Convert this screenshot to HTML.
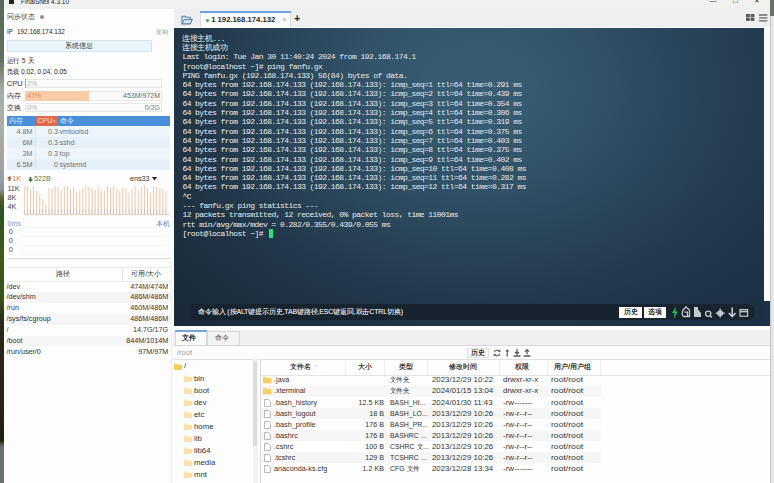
<!DOCTYPE html>
<html><head><meta charset="utf-8"><style>
*{margin:0;padding:0;box-sizing:border-box}
html,body{width:774px;height:483px;overflow:hidden;background:#f0f0f0;font-family:"Liberation Sans",sans-serif;color:#333}
.a{position:absolute}
.t{white-space:nowrap}
pre{font-family:"Liberation Mono",monospace}
</style></head>
<body>
<div class="a" style="left:0px;top:0px;width:4px;height:483px;background:linear-gradient(180deg,#5a6a5a 0px,#607060 60px,#a5aea5 90px,#a8b0a8 130px,#aca69e 150px,#a2a2a2 170px,#92a0a6 180px,#8a9090 190px,#5a6030 198px,#2d5222 210px,#3f5a1c 250px,#3a5218 300px,#2a2818 322px,#2c2519 400px,#201c10 440px,#6a7070 447px,#687070 483px)"></div>
<div class="a" style="left:4px;top:0px;width:766px;height:9px;background:#f1f1f0"></div>
<div class="a" style="left:9px;top:-1px;width:5px;height:4.5px;background:#222"></div>
<div class="a t" style="left:21.2px;top:-3.20px;font-size:8px;line-height:10px;color:#1a1a1a;font-weight:normal;transform:scaleX(0.805);transform-origin:0 50%;">FinalShell 4.3.10</div>
<div class="a t" style="left:730.5px;width:10px;text-align:center;top:-4.50px;font-size:8px;line-height:10px;color:#333;font-weight:normal;">□</div>
<div class="a t" style="left:752.0px;width:10px;text-align:center;top:-4.50px;font-size:7px;line-height:10px;color:#333;font-weight:normal;">✕</div>
<div class="a t" style="left:708.0px;width:10px;text-align:center;top:-4.50px;font-size:7px;line-height:10px;color:#333;font-weight:normal;">—</div>
<div class="a" style="left:769.5px;top:0px;width:4.5px;height:483px;background:#e6e6e6;border-left:1.5px solid #c4c4c4"></div>
<div class="a" style="left:769.5px;top:0px;width:4.5px;height:16px;background:#6c706a"></div>
<div class="a" style="left:4px;top:9px;width:169.5px;height:474px;background:#fdfdfd"></div>
<div class="a" style="left:170.5px;top:262px;width:0.8px;height:221px;background:#ececec"></div>
<div class="a t" style="left:7.4px;top:12.40px;font-size:7.5px;line-height:10px;color:#4a4a4a;font-weight:normal;"><span style="font-size:95%">同步状态</span></div>
<div class="a" style="left:40.2px;top:15.4px;width:4px;height:4px;background:#909090;border-radius:50%"></div>
<div class="a t" style="left:6.8px;top:26.60px;font-size:7.5px;line-height:10px;color:#222;font-weight:normal;transform:scaleX(0.800);transform-origin:0 50%;">IP</div>
<div class="a t" style="left:16.9px;top:26.60px;font-size:7.5px;line-height:10px;color:#262626;font-weight:normal;transform:scaleX(0.850);transform-origin:0 50%;">192.168.174.132</div>
<div class="a t" style="left:137.5px;width:30px;text-align:right;top:26.60px;font-size:6.5px;line-height:10px;color:#9a9a9a;font-weight:normal;"><span style="font-size:95%">复制</span></div>
<div class="a" style="left:6.8px;top:40.3px;width:145.2px;height:11.8px;background:#e8f5fb;border:1px solid #d5e3ea"></div>
<div class="a t" style="left:39.400000000000006px;width:80px;text-align:center;top:41.20px;font-size:7.5px;line-height:10px;color:#333;font-weight:normal;"><span style="font-size:95%">系统信息</span></div>
<div class="a t" style="left:6.8px;top:56.20px;font-size:7.5px;line-height:10px;color:#333;font-weight:normal;transform:scaleX(0.920);transform-origin:0 50%;"><span style="font-size:95%">运行</span> 5 <span style="font-size:95%">天</span></div>
<div class="a t" style="left:6.8px;top:66.70px;font-size:7.5px;line-height:10px;color:#262626;font-weight:normal;transform:scaleX(0.876);transform-origin:0 50%;"><span style="font-size:95%">负载</span> 0.02, 0.04, 0.05</div>
<div class="a t" style="left:6.8px;top:79.20px;font-size:7.5px;line-height:10px;color:#333;font-weight:normal;">CPU</div>
<div class="a" style="left:24.8px;top:79.2px;width:137.7px;height:9.3px;background:#fbfbfb;border:1px solid #e6e6e6"></div>
<div class="a" style="left:24.8px;top:79.2px;width:1.2px;height:9.3px;background:#7fbf7f"></div>
<div class="a t" style="left:27px;top:79.00px;font-size:7px;line-height:10px;color:#a8b8a8;font-weight:normal;">2%</div>
<div class="a t" style="left:6.8px;top:91.00px;font-size:7.5px;line-height:10px;color:#333;font-weight:normal;"><span style="font-size:95%">内存</span></div>
<div class="a" style="left:24.8px;top:91.0px;width:137.7px;height:9.8px;background:#fbfbfb;border:1px solid #e6e6e6"></div>
<div class="a" style="left:24.8px;top:91.0px;width:64.5px;height:9.8px;background:#f9cba8"></div>
<div class="a t" style="left:27px;top:91.00px;font-size:7px;line-height:10px;color:#d98c5e;font-weight:normal;">47%</div>
<div class="a t" style="left:100px;width:60px;text-align:right;top:91.00px;font-size:7px;line-height:10px;color:#666;font-weight:normal;">453M/972M</div>
<div class="a t" style="left:6.8px;top:103.40px;font-size:7.5px;line-height:10px;color:#333;font-weight:normal;"><span style="font-size:95%">交换</span></div>
<div class="a" style="left:24.8px;top:103.2px;width:137.7px;height:9.2px;background:#fbfbfb;border:1px solid #e6e6e6"></div>
<div class="a t" style="left:27px;top:103.20px;font-size:7px;line-height:10px;color:#b0b0b0;font-weight:normal;">0%</div>
<div class="a t" style="left:100px;width:60px;text-align:right;top:103.20px;font-size:7px;line-height:10px;color:#7a7a7a;font-weight:normal;">0/2G</div>
<div class="a" style="left:6.7px;top:116.0px;width:163.3px;height:10.2px;background:#4b8ed8"></div>
<div class="a" style="left:35.7px;top:116.0px;width:22.2px;height:10.2px;background:#dd6a4a"></div>
<div class="a t" style="left:8.5px;top:116.10px;font-size:7px;line-height:10px;color:#d8eaff;font-weight:normal;"><span style="font-size:95%">内存</span></div>
<div class="a t" style="left:37.5px;top:116.10px;font-size:7px;line-height:10px;color:#ffe0d4;font-weight:normal;">CPU</div>
<div class="a t" style="left:52.5px;top:116.10px;font-size:5px;line-height:10px;color:#ffd0c0;font-weight:normal;">▾</div>
<div class="a t" style="left:60px;top:116.10px;font-size:7px;line-height:10px;color:#d8eaff;font-weight:normal;"><span style="font-size:95%">命令</span></div>
<div class="a" style="left:6.7px;top:126.2px;width:163.3px;height:10.93px;background:#eef5fb"></div>
<div class="a t" style="left:2.3999999999999986px;width:30px;text-align:right;top:127.30px;font-size:7.2px;line-height:10px;color:#707070;font-weight:normal;">4.8M</div>
<div class="a t" style="left:27.9px;width:30px;text-align:right;top:127.30px;font-size:7.2px;line-height:10px;color:#707070;font-weight:normal;">0.3</div>
<div class="a t" style="left:59.4px;top:127.30px;font-size:7.2px;line-height:10px;color:#707070;font-weight:normal;">vmtoolsd</div>
<div class="a" style="left:6.7px;top:137.13px;width:163.3px;height:10.93px;background:#e6f0f9"></div>
<div class="a t" style="left:2.3999999999999986px;width:30px;text-align:right;top:138.23px;font-size:7.2px;line-height:10px;color:#707070;font-weight:normal;">6M</div>
<div class="a t" style="left:27.9px;width:30px;text-align:right;top:138.23px;font-size:7.2px;line-height:10px;color:#707070;font-weight:normal;">0.3</div>
<div class="a t" style="left:59.4px;top:138.23px;font-size:7.2px;line-height:10px;color:#707070;font-weight:normal;">sshd</div>
<div class="a" style="left:6.7px;top:148.06px;width:163.3px;height:10.93px;background:#eef5fb"></div>
<div class="a t" style="left:2.3999999999999986px;width:30px;text-align:right;top:149.16px;font-size:7.2px;line-height:10px;color:#707070;font-weight:normal;">3M</div>
<div class="a t" style="left:27.9px;width:30px;text-align:right;top:149.16px;font-size:7.2px;line-height:10px;color:#707070;font-weight:normal;">0.3</div>
<div class="a t" style="left:59.4px;top:149.16px;font-size:7.2px;line-height:10px;color:#707070;font-weight:normal;">top</div>
<div class="a" style="left:6.7px;top:158.99px;width:163.3px;height:10.93px;background:#e6f0f9"></div>
<div class="a t" style="left:2.3999999999999986px;width:30px;text-align:right;top:160.09px;font-size:7.2px;line-height:10px;color:#707070;font-weight:normal;">6.5M</div>
<div class="a t" style="left:27.9px;width:30px;text-align:right;top:160.09px;font-size:7.2px;line-height:10px;color:#707070;font-weight:normal;">0</div>
<div class="a t" style="left:59.4px;top:160.09px;font-size:7.2px;line-height:10px;color:#707070;font-weight:normal;">systemd</div>
<div class="a" style="left:35px;top:126.2px;width:0.6px;height:43.7px;background:#d8e4ee"></div>
<svg class="a" style="left:6.5px;top:176.3px" width="5" height="5" viewBox="0 0 5 5"><path d="M2.5 0 L5 2.6 L3.4 2.6 L3.4 5 L1.6 5 L1.6 2.6 L0 2.6 Z" fill="#9a5a2a"/></svg>
<div class="a t" style="left:12.2px;top:174.00px;font-size:7.2px;line-height:10px;color:#d57a3c;font-weight:normal;">1K</div>
<svg class="a" style="left:28.2px;top:176.5px" width="5" height="5" viewBox="0 0 5 5"><path d="M2.5 5 L5 2.4 L3.4 2.4 L3.4 0 L1.6 0 L1.6 2.4 L0 2.4 Z" fill="#2f6a38"/></svg>
<div class="a t" style="left:34px;top:174.00px;font-size:7.2px;line-height:10px;color:#4f8058;font-weight:normal;">522B</div>
<div class="a t" style="left:130px;top:174.30px;font-size:7.2px;line-height:10px;color:#333;font-weight:normal;">ens33</div>
<svg class="a" style="left:152.3px;top:177.3px" width="5" height="4" viewBox="0 0 5 4"><path d="M0 0 L5 0 L2.5 3.6 Z" fill="#222"/></svg>
<div class="a t" style="left:7.4px;top:184.00px;font-size:7.2px;line-height:10px;color:#444;font-weight:normal;">11K</div>
<div class="a t" style="left:7.4px;top:193.20px;font-size:7.2px;line-height:10px;color:#444;font-weight:normal;">8K</div>
<div class="a t" style="left:7.4px;top:202.40px;font-size:7.2px;line-height:10px;color:#444;font-weight:normal;">4K</div>
<svg class="a" style="left:24px;top:184.5px" width="146" height="31" viewBox="0 0 146 31"><line x1="0.30" y1="1.00" x2="0.30" y2="24" stroke="#efc6a4" stroke-width="0.95"/><line x1="0.30" y1="24" x2="0.30" y2="30" stroke="#c9b09c" stroke-width="0.9"/><line x1="3.38" y1="1.00" x2="3.38" y2="24" stroke="#efc6a4" stroke-width="0.95"/><line x1="3.38" y1="24" x2="3.38" y2="30" stroke="#c9b09c" stroke-width="0.9"/><line x1="6.46" y1="4.00" x2="6.46" y2="24" stroke="#efc6a4" stroke-width="0.95"/><line x1="6.46" y1="24" x2="6.46" y2="30" stroke="#c9b09c" stroke-width="0.9"/><line x1="9.54" y1="1.00" x2="9.54" y2="24" stroke="#efc6a4" stroke-width="0.95"/><line x1="9.54" y1="24" x2="9.54" y2="30" stroke="#c9b09c" stroke-width="0.9"/><line x1="12.62" y1="6.00" x2="12.62" y2="24" stroke="#efc6a4" stroke-width="0.95"/><line x1="12.62" y1="24" x2="12.62" y2="30" stroke="#c9b09c" stroke-width="0.9"/><line x1="15.70" y1="9.00" x2="15.70" y2="24" stroke="#efc6a4" stroke-width="0.95"/><line x1="15.70" y1="24" x2="15.70" y2="30" stroke="#c9b09c" stroke-width="0.9"/><line x1="18.78" y1="14.00" x2="18.78" y2="24" stroke="#efc6a4" stroke-width="0.95"/><line x1="18.78" y1="24" x2="18.78" y2="30" stroke="#c9b09c" stroke-width="0.9"/><line x1="21.86" y1="20.00" x2="21.86" y2="24" stroke="#efc6a4" stroke-width="0.95"/><line x1="21.86" y1="24" x2="21.86" y2="30" stroke="#c9b09c" stroke-width="0.9"/><line x1="24.94" y1="3.00" x2="24.94" y2="24" stroke="#efc6a4" stroke-width="0.95"/><line x1="24.94" y1="24" x2="24.94" y2="30" stroke="#c9b09c" stroke-width="0.9"/><line x1="28.02" y1="4.00" x2="28.02" y2="24" stroke="#efc6a4" stroke-width="0.95"/><line x1="28.02" y1="24" x2="28.02" y2="30" stroke="#c9b09c" stroke-width="0.9"/><line x1="31.10" y1="1.00" x2="31.10" y2="24" stroke="#efc6a4" stroke-width="0.95"/><line x1="31.10" y1="24" x2="31.10" y2="30" stroke="#c9b09c" stroke-width="0.9"/><line x1="34.18" y1="2.00" x2="34.18" y2="24" stroke="#efc6a4" stroke-width="0.95"/><line x1="34.18" y1="24" x2="34.18" y2="30" stroke="#c9b09c" stroke-width="0.9"/><line x1="37.26" y1="5.00" x2="37.26" y2="24" stroke="#efc6a4" stroke-width="0.95"/><line x1="37.26" y1="24" x2="37.26" y2="30" stroke="#c9b09c" stroke-width="0.9"/><line x1="40.34" y1="1.00" x2="40.34" y2="24" stroke="#efc6a4" stroke-width="0.95"/><line x1="40.34" y1="24" x2="40.34" y2="30" stroke="#c9b09c" stroke-width="0.9"/><line x1="43.42" y1="1.00" x2="43.42" y2="24" stroke="#efc6a4" stroke-width="0.95"/><line x1="43.42" y1="24" x2="43.42" y2="30" stroke="#c9b09c" stroke-width="0.9"/><line x1="46.50" y1="4.00" x2="46.50" y2="24" stroke="#efc6a4" stroke-width="0.95"/><line x1="46.50" y1="24" x2="46.50" y2="30" stroke="#c9b09c" stroke-width="0.9"/><line x1="49.58" y1="2.00" x2="49.58" y2="24" stroke="#efc6a4" stroke-width="0.95"/><line x1="49.58" y1="24" x2="49.58" y2="30" stroke="#c9b09c" stroke-width="0.9"/><line x1="52.66" y1="8.00" x2="52.66" y2="24" stroke="#efc6a4" stroke-width="0.95"/><line x1="52.66" y1="24" x2="52.66" y2="30" stroke="#c9b09c" stroke-width="0.9"/><line x1="55.74" y1="5.00" x2="55.74" y2="24" stroke="#efc6a4" stroke-width="0.95"/><line x1="55.74" y1="24" x2="55.74" y2="30" stroke="#c9b09c" stroke-width="0.9"/><line x1="58.82" y1="3.00" x2="58.82" y2="24" stroke="#efc6a4" stroke-width="0.95"/><line x1="58.82" y1="24" x2="58.82" y2="30" stroke="#c9b09c" stroke-width="0.9"/><line x1="61.90" y1="1.00" x2="61.90" y2="24" stroke="#efc6a4" stroke-width="0.95"/><line x1="61.90" y1="24" x2="61.90" y2="30" stroke="#c9b09c" stroke-width="0.9"/><line x1="64.98" y1="2.00" x2="64.98" y2="24" stroke="#efc6a4" stroke-width="0.95"/><line x1="64.98" y1="24" x2="64.98" y2="30" stroke="#c9b09c" stroke-width="0.9"/><line x1="68.06" y1="3.00" x2="68.06" y2="24" stroke="#efc6a4" stroke-width="0.95"/><line x1="68.06" y1="24" x2="68.06" y2="30" stroke="#c9b09c" stroke-width="0.9"/><line x1="71.14" y1="5.00" x2="71.14" y2="24" stroke="#efc6a4" stroke-width="0.95"/><line x1="71.14" y1="24" x2="71.14" y2="30" stroke="#c9b09c" stroke-width="0.9"/><line x1="74.22" y1="2.00" x2="74.22" y2="24" stroke="#efc6a4" stroke-width="0.95"/><line x1="74.22" y1="24" x2="74.22" y2="30" stroke="#c9b09c" stroke-width="0.9"/><line x1="77.30" y1="4.00" x2="77.30" y2="24" stroke="#efc6a4" stroke-width="0.95"/><line x1="77.30" y1="24" x2="77.30" y2="30" stroke="#c9b09c" stroke-width="0.9"/><line x1="80.38" y1="6.00" x2="80.38" y2="24" stroke="#efc6a4" stroke-width="0.95"/><line x1="80.38" y1="24" x2="80.38" y2="30" stroke="#c9b09c" stroke-width="0.9"/><line x1="83.46" y1="1.00" x2="83.46" y2="24" stroke="#efc6a4" stroke-width="0.95"/><line x1="83.46" y1="24" x2="83.46" y2="30" stroke="#c9b09c" stroke-width="0.9"/><line x1="86.54" y1="3.00" x2="86.54" y2="24" stroke="#efc6a4" stroke-width="0.95"/><line x1="86.54" y1="24" x2="86.54" y2="30" stroke="#c9b09c" stroke-width="0.9"/><line x1="89.62" y1="1.00" x2="89.62" y2="24" stroke="#efc6a4" stroke-width="0.95"/><line x1="89.62" y1="24" x2="89.62" y2="30" stroke="#c9b09c" stroke-width="0.9"/><line x1="92.70" y1="4.00" x2="92.70" y2="24" stroke="#efc6a4" stroke-width="0.95"/><line x1="92.70" y1="24" x2="92.70" y2="30" stroke="#c9b09c" stroke-width="0.9"/><line x1="95.78" y1="6.00" x2="95.78" y2="24" stroke="#efc6a4" stroke-width="0.95"/><line x1="95.78" y1="24" x2="95.78" y2="30" stroke="#c9b09c" stroke-width="0.9"/><line x1="98.86" y1="2.00" x2="98.86" y2="24" stroke="#efc6a4" stroke-width="0.95"/><line x1="98.86" y1="24" x2="98.86" y2="30" stroke="#c9b09c" stroke-width="0.9"/><line x1="101.94" y1="3.00" x2="101.94" y2="24" stroke="#efc6a4" stroke-width="0.95"/><line x1="101.94" y1="24" x2="101.94" y2="30" stroke="#c9b09c" stroke-width="0.9"/><line x1="105.02" y1="8.00" x2="105.02" y2="24" stroke="#efc6a4" stroke-width="0.95"/><line x1="105.02" y1="24" x2="105.02" y2="30" stroke="#c9b09c" stroke-width="0.9"/><line x1="108.10" y1="4.00" x2="108.10" y2="24" stroke="#efc6a4" stroke-width="0.95"/><line x1="108.10" y1="24" x2="108.10" y2="30" stroke="#c9b09c" stroke-width="0.9"/><line x1="111.18" y1="1.00" x2="111.18" y2="24" stroke="#efc6a4" stroke-width="0.95"/><line x1="111.18" y1="24" x2="111.18" y2="30" stroke="#c9b09c" stroke-width="0.9"/><line x1="114.26" y1="6.00" x2="114.26" y2="24" stroke="#efc6a4" stroke-width="0.95"/><line x1="114.26" y1="24" x2="114.26" y2="30" stroke="#c9b09c" stroke-width="0.9"/><line x1="117.34" y1="2.00" x2="117.34" y2="24" stroke="#efc6a4" stroke-width="0.95"/><line x1="117.34" y1="24" x2="117.34" y2="30" stroke="#c9b09c" stroke-width="0.9"/><line x1="120.42" y1="0.00" x2="120.42" y2="24" stroke="#efc6a4" stroke-width="0.95"/><line x1="120.42" y1="24" x2="120.42" y2="30" stroke="#c9b09c" stroke-width="0.9"/><line x1="123.50" y1="3.00" x2="123.50" y2="24" stroke="#efc6a4" stroke-width="0.95"/><line x1="123.50" y1="24" x2="123.50" y2="30" stroke="#c9b09c" stroke-width="0.9"/><line x1="126.58" y1="8.00" x2="126.58" y2="24" stroke="#efc6a4" stroke-width="0.95"/><line x1="126.58" y1="24" x2="126.58" y2="30" stroke="#c9b09c" stroke-width="0.9"/><line x1="129.66" y1="1.00" x2="129.66" y2="24" stroke="#efc6a4" stroke-width="0.95"/><line x1="129.66" y1="24" x2="129.66" y2="30" stroke="#c9b09c" stroke-width="0.9"/><line x1="132.74" y1="2.00" x2="132.74" y2="24" stroke="#efc6a4" stroke-width="0.95"/><line x1="132.74" y1="24" x2="132.74" y2="30" stroke="#c9b09c" stroke-width="0.9"/><line x1="135.82" y1="3.00" x2="135.82" y2="24" stroke="#efc6a4" stroke-width="0.95"/><line x1="135.82" y1="24" x2="135.82" y2="30" stroke="#c9b09c" stroke-width="0.9"/><line x1="138.90" y1="4.00" x2="138.90" y2="24" stroke="#efc6a4" stroke-width="0.95"/><line x1="138.90" y1="24" x2="138.90" y2="30" stroke="#c9b09c" stroke-width="0.9"/><line x1="141.98" y1="6.00" x2="141.98" y2="24" stroke="#efc6a4" stroke-width="0.95"/><line x1="141.98" y1="24" x2="141.98" y2="30" stroke="#c9b09c" stroke-width="0.9"/><line x1="0" y1="29.6" x2="146" y2="29.6" stroke="#e8cdb5" stroke-width="0.9"/></svg>
<div class="a t" style="left:7.4px;top:218.60px;font-size:7.2px;line-height:10px;color:#7ba3cc;font-weight:normal;">0ms</div>
<div class="a t" style="left:150px;width:20px;text-align:right;top:219.00px;font-size:7px;line-height:10px;color:#5b86c0;font-weight:normal;"><span style="font-size:95%">本机</span></div>
<div class="a" style="left:22px;top:226.8px;width:148px;height:0.6px;background:#f4f4f4"></div>
<div class="a" style="left:22px;top:235.5px;width:148px;height:0.6px;background:#f4f4f4"></div>
<div class="a" style="left:22px;top:244.5px;width:148px;height:0.6px;background:#f4f4f4"></div>
<div class="a" style="left:22px;top:254px;width:148px;height:0.6px;background:#f4f4f4"></div>
<div class="a t" style="left:8.7px;top:227.40px;font-size:7.2px;line-height:10px;color:#444;font-weight:normal;">0</div>
<div class="a t" style="left:8.7px;top:235.80px;font-size:7.2px;line-height:10px;color:#444;font-weight:normal;">0</div>
<div class="a t" style="left:8.7px;top:245.00px;font-size:7.2px;line-height:10px;color:#444;font-weight:normal;">0</div>
<div class="a" style="left:6.5px;top:257.8px;width:164px;height:1px;background:#dcdcdc"></div>
<div class="a" style="left:6.5px;top:266.5px;width:164.5px;height:1px;background:#eaeaea"></div>
<div class="a" style="left:6.5px;top:281px;width:164.5px;height:0.8px;background:#eaeaea"></div>
<div class="a" style="left:121.6px;top:267px;width:0.8px;height:14px;background:#e6e6e6"></div>
<div class="a t" style="left:42.5px;width:40px;text-align:center;top:269.00px;font-size:7.2px;line-height:10px;color:#333;font-weight:normal;"><span style="font-size:95%">路径</span></div>
<div class="a t" style="left:121.4px;width:50px;text-align:center;top:269.00px;font-size:7.2px;line-height:10px;color:#333;font-weight:normal;"><span style="font-size:95%">可用</span>/<span style="font-size:95%">大小</span></div>
<div class="a t" style="left:6.5px;top:281.60px;font-size:7.2px;line-height:10px;color:#333;font-weight:normal;">/dev</div>
<div class="a t" style="left:108.19999999999999px;width:60px;text-align:right;top:281.60px;font-size:7.2px;line-height:10px;color:#333;font-weight:normal;">474M/474M</div>
<div class="a" style="left:6.5px;top:292.07000000000005px;width:164.5px;height:10.87px;background:#f5f5f5"></div>
<div class="a t" style="left:6.5px;top:292.47px;font-size:7.2px;line-height:10px;color:#333;font-weight:normal;">/dev/shm</div>
<div class="a t" style="left:108.19999999999999px;width:60px;text-align:right;top:292.47px;font-size:7.2px;line-height:10px;color:#333;font-weight:normal;">486M/486M</div>
<div class="a t" style="left:6.5px;top:303.34px;font-size:7.2px;line-height:10px;color:#333;font-weight:normal;">/run</div>
<div class="a t" style="left:108.19999999999999px;width:60px;text-align:right;top:303.34px;font-size:7.2px;line-height:10px;color:#333;font-weight:normal;">460M/486M</div>
<div class="a" style="left:6.5px;top:313.81000000000006px;width:164.5px;height:10.87px;background:#f5f5f5"></div>
<div class="a t" style="left:6.5px;top:314.21px;font-size:7.2px;line-height:10px;color:#333;font-weight:normal;">/sys/fs/cgroup</div>
<div class="a t" style="left:108.19999999999999px;width:60px;text-align:right;top:314.21px;font-size:7.2px;line-height:10px;color:#333;font-weight:normal;">486M/486M</div>
<div class="a t" style="left:6.5px;top:325.08px;font-size:7.2px;line-height:10px;color:#333;font-weight:normal;">/</div>
<div class="a t" style="left:108.19999999999999px;width:60px;text-align:right;top:325.08px;font-size:7.2px;line-height:10px;color:#333;font-weight:normal;">14.7G/17G</div>
<div class="a" style="left:6.5px;top:335.55000000000007px;width:164.5px;height:10.87px;background:#f5f5f5"></div>
<div class="a t" style="left:6.5px;top:335.95px;font-size:7.2px;line-height:10px;color:#333;font-weight:normal;">/boot</div>
<div class="a t" style="left:108.19999999999999px;width:60px;text-align:right;top:335.95px;font-size:7.2px;line-height:10px;color:#333;font-weight:normal;">844M/1014M</div>
<div class="a t" style="left:6.5px;top:346.82px;font-size:7.2px;line-height:10px;color:#333;font-weight:normal;">/run/user/0</div>
<div class="a t" style="left:108.19999999999999px;width:60px;text-align:right;top:346.82px;font-size:7.2px;line-height:10px;color:#333;font-weight:normal;">97M/97M</div>
<div class="a" style="left:174px;top:9px;width:595.5px;height:19px;background:#efeff1"></div>
<svg class="a" style="left:180.5px;top:14.5px" width="12" height="10" viewBox="0 0 12 10"><path d="M1 1.2 L4.2 1.2 L5.2 2.3 L9.3 2.3 L9.3 4.3 L11.2 4.3 L9.4 8.9 L1 8.9 Z" fill="#d3e6f6" stroke="#5f7f9f" stroke-width="1.1" stroke-linejoin="round"/><path d="M1.2 8.6 L3 4.6 L11 4.6" fill="none" stroke="#5f7f9f" stroke-width="1"/></svg>
<div class="a" style="left:200.4px;top:11.2px;width:90.3px;height:15.6px;background:#fafafa;border-left:1px solid #dcdcdc;border-right:1px solid #dcdcdc"></div>
<div class="a" style="left:200.4px;top:11.2px;width:90.3px;height:1.8px;background:#6ea2dc"></div>
<div class="a" style="left:205.7px;top:18.7px;width:3px;height:3px;background:#3aaa50;border-radius:50%"></div>
<div class="a t" style="left:211.2px;top:14.90px;font-size:7.7px;line-height:10px;color:#2a2a2a;font-weight:bold;">1 192.168.174.132</div>
<div class="a t" style="left:282.3px;top:14.60px;font-size:7.5px;line-height:10px;color:#a0a0a0;font-weight:normal;">×</div>
<div class="a t" style="left:292.2px;width:10px;text-align:center;top:14.20px;font-size:10px;line-height:10px;color:#111;font-weight:bold;">+</div>
<svg class="a" style="left:746px;top:14.2px" width="9" height="7" viewBox="0 0 9 7"><rect x="0" y="0" width="3.8" height="3.2" fill="#555a55"/><rect x="4.6" y="0" width="3.8" height="3.2" fill="#555a55"/><rect x="0" y="3.7" width="3.8" height="3.2" fill="#555a55"/><rect x="4.6" y="3.7" width="3.8" height="3.2" fill="#555a55"/></svg>
<svg class="a" style="left:759.3px;top:14px" width="9" height="8" viewBox="0 0 9 8"><rect x="0" y="0.3" width="8.4" height="1.4" fill="#606060"/><rect x="0" y="3.2" width="8.4" height="1.4" fill="#707070"/><rect x="0" y="6.1" width="8.4" height="1.4" fill="#707070"/></svg>
<div class="a" style="left:174px;top:28px;width:590px;height:298px;overflow:hidden;background:linear-gradient(90deg,rgba(40,72,110,0) 55%,rgba(40,72,110,0.16) 100%),radial-gradient(ellipse 618px 474px at 306px 59px,rgb(55,92,115) 0%,rgb(53,90,113) 9%,rgb(50,84,106) 18%,rgb(45,75,96) 27%,rgb(40,66,85) 36%,rgb(35,57,75) 45%,rgb(31,49,66) 55%,rgb(27,44,60) 64%,rgb(25,40,56) 73%,rgb(24,38,53) 82%,rgb(24,37,52) 91%,rgb(23,36,51) 100%)"></div>
<div class="a" style="left:764px;top:28px;width:5.5px;height:272.5px;background:#fafafa"></div>
<div class="a" style="left:173px;top:26.6px;width:596.5px;height:1.4px;background:#fbfdfd"></div>
<div class="a" style="left:764px;top:300.5px;width:5.5px;height:25.5px;background:#1d3247"></div>
<pre class="a" style="left:182.4px;top:33.7px;font-size:8px;letter-spacing:-0.56px;line-height:9.3px;color:#cdd4d8;white-space:pre;text-shadow:0 0 0.4px rgba(205,212,216,0.6)">连接主机...
连接主机成功
Last login: Tue Jan 30 11:40:24 2024 from 192.168.174.1
[root@localhost ~]# ping fanfu.gx
PING fanfu.gx (192.168.174.133) 56(84) bytes of data.
64 bytes from 192.168.174.133 (192.168.174.133): icmp_seq=1 ttl=64 time=0.291 ms
64 bytes from 192.168.174.133 (192.168.174.133): icmp_seq=2 ttl=64 time=0.439 ms
64 bytes from 192.168.174.133 (192.168.174.133): icmp_seq=3 ttl=64 time=0.354 ms
64 bytes from 192.168.174.133 (192.168.174.133): icmp_seq=4 ttl=64 time=0.306 ms
64 bytes from 192.168.174.133 (192.168.174.133): icmp_seq=5 ttl=64 time=0.319 ms
64 bytes from 192.168.174.133 (192.168.174.133): icmp_seq=6 ttl=64 time=0.375 ms
64 bytes from 192.168.174.133 (192.168.174.133): icmp_seq=7 ttl=64 time=0.403 ms
64 bytes from 192.168.174.133 (192.168.174.133): icmp_seq=8 ttl=64 time=0.375 ms
64 bytes from 192.168.174.133 (192.168.174.133): icmp_seq=9 ttl=64 time=0.402 ms
64 bytes from 192.168.174.133 (192.168.174.133): icmp_seq=10 ttl=64 time=0.408 ms
64 bytes from 192.168.174.133 (192.168.174.133): icmp_seq=11 ttl=64 time=0.282 ms
64 bytes from 192.168.174.133 (192.168.174.133): icmp_seq=12 ttl=64 time=0.317 ms
^C
--- fanfu.gx ping statistics ---
12 packets transmitted, 12 received, 0% packet loss, time 11001ms
rtt min/avg/max/mdev = 0.282/0.355/0.439/0.055 ms
[root@localhost ~]# </pre>
<div class="a" style="left:268.5px;top:229px;width:4.3px;height:8.5px;background:#2ee07a"></div>
<div class="a" style="left:190.5px;top:304.2px;width:564.5px;height:15.4px;background:#17232f;border-radius:0 7.7px 7.7px 0"></div>
<div class="a t" style="left:198px;top:307.20px;font-size:6.9px;line-height:10px;color:#d0d5d9;font-weight:normal;letter-spacing:-0.12px;text-shadow:0 0 0.4px #d0d5d9;"><span style="font-size:95%">命令输入</span> (<span style="font-size:95%">按</span>ALT<span style="font-size:95%">键提示历史</span>,TAB<span style="font-size:95%">键路径</span>,ESC<span style="font-size:95%">键返回</span>,<span style="font-size:95%">双击</span>CTRL<span style="font-size:95%">切换</span>)</div>
<div class="a" style="left:619.3px;top:307px;width:22.4px;height:10.7px;background:#fbfbfb"></div>
<div class="a t" style="left:619.5px;width:22px;text-align:center;top:307.40px;font-size:7.3px;line-height:10px;color:#1a1a1a;font-weight:normal;text-shadow:0 0 0.35px #333;"><span style="font-size:95%">历史</span></div>
<div class="a" style="left:644px;top:307px;width:22px;height:10.7px;background:#fbfbfb"></div>
<div class="a t" style="left:644.0px;width:22px;text-align:center;top:307.40px;font-size:7.3px;line-height:10px;color:#1a1a1a;font-weight:normal;text-shadow:0 0 0.35px #333;"><span style="font-size:95%">选项</span></div>
<svg class="a" style="left:670.5px;top:305.5px" width="8" height="13" viewBox="0 0 8 13"><path d="M5.2 0.3 L1 7 L3.6 7 L2.6 12.7 L7 5.6 L4.3 5.6 Z" fill="#2fb048"/></svg>
<svg class="a" style="left:680px;top:305px" width="70" height="14" viewBox="0 0 70 14" fill="none" stroke="#c4c9ce" stroke-width="1.3">
<path d="M3 5 L6 2 L9.5 5 L9.5 11.5 L3.5 11.5 L2 9 Z" /><path d="M4.5 7.2 L7.5 7.2 L7.5 11.5" />
<path d="M14 2 L18 2 L18 4.5 L21 8 L21 12 L14 12 Z" fill="#c4c9ce" stroke="none"/>
<circle cx="28.2" cy="8.8" r="2.6"/><path d="M30 10.7 L32 12.5"/>
<circle cx="40.2" cy="8.2" r="2.9" fill="#c4c9ce" stroke="none"/><circle cx="40.2" cy="8.2" r="1" fill="#17232f" stroke="none"/><path d="M40.2 3.8 L40.2 12.6 M35.8 8.2 L44.6 8.2" stroke-width="1.4"/>
<path d="M52.2 2.5 L52.2 11.5 M48.8 8 L52.2 11.5 L55.6 8" stroke-width="1.6"/>
<rect x="60" y="4.6" width="7.6" height="6.6" stroke-width="1.2"/><path d="M60 6.6 L67.6 6.6" stroke-width="1.5"/>
</svg>
<div class="a" style="left:173px;top:326px;width:596.5px;height:157px;background:#fdfdfd"></div>
<div class="a" style="left:173px;top:330.3px;width:596.5px;height:14.4px;background:#f0f0f0"></div>
<div class="a" style="left:173px;top:344.5px;width:596.5px;height:0.8px;background:#d6d6d6"></div>
<div class="a" style="left:175.2px;top:330.3px;width:31.4px;height:14.6px;background:#fbfbfb;border-left:1px solid #d8d8d8;border-right:1px solid #d8d8d8"></div>
<div class="a" style="left:175.2px;top:330.3px;width:31.4px;height:1.8px;background:#74a6dc"></div>
<div class="a t" style="left:174.2px;width:30px;text-align:center;top:333.30px;font-size:7.5px;line-height:10px;color:#222;font-weight:bold;"><span style="font-size:95%">文件</span></div>
<div class="a" style="left:207.2px;top:330.7px;width:32.6px;height:14px;background:#f3f3f3;border:1px solid #d8d8d8;border-bottom:none"></div>
<div class="a t" style="left:207.0px;width:30px;text-align:center;top:333.30px;font-size:7.5px;line-height:10px;color:#555;font-weight:normal;"><span style="font-size:95%">命令</span></div>
<div class="a t" style="left:177px;top:348.40px;font-size:7.5px;line-height:10px;color:#9a9a9a;font-weight:normal;">/root</div>
<div class="a" style="left:173px;top:359px;width:596.5px;height:1px;background:#dedede"></div>
<div class="a" style="left:466.5px;top:347.8px;width:22px;height:10.4px;background:#fafafa;border:1px solid #dedede"></div>
<div class="a t" style="left:466.5px;width:22px;text-align:center;top:348.00px;font-size:7.8px;line-height:10px;color:#1a1a1a;font-weight:normal;text-shadow:0 0 0.3px #444;"><span style="font-size:95%">历史</span></div>
<svg class="a" style="left:492px;top:348px" width="42" height="10" viewBox="0 0 42 10" fill="none" stroke="#5a5a5a" stroke-width="1.1">
<path d="M2.2 4.2 A3 3 0 0 1 7.6 3.6"/><path d="M7.8 5.8 A3 3 0 0 1 2.4 6.4"/><path d="M6.2 3.4 L8 3.8 L8.2 1.8" stroke-width="0.9"/><path d="M3.8 6.6 L2 6.2 L1.8 8.2" stroke-width="0.9"/>
<path d="M15.3 2 L15.3 8 M14 3.3 L15.3 2 L16.6 3.3 M14.2 8 L15.3 8"/>
<path d="M25 1 L25 5.8 M23 4 L25 6 L27 4 M21.5 8 L28.5 8" stroke-width="1.3"/>
<path d="M35 6.2 L35 1.6 M33 3.6 L35 1.6 L37 3.6 M31.5 8 L38.5 8" stroke-width="1.3"/>
</svg>
<svg class="a" style="left:173.7px;top:362.6px" width="8.5" height="7" viewBox="0 0 8.5 7"><path d="M0 0.5 L3 0.5 L3.8 1.5 L8.5 1.5 L8.5 7 L0 7 Z" fill="#f7d66e"/><rect x="0" y="2.3" width="8.5" height="4.7" fill="#f0bd30" opacity="0.35"/></svg>
<div class="a t" style="left:184px;top:361.00px;font-size:8px;line-height:10px;color:#333;font-weight:normal;">/</div>
<svg class="a" style="left:183.5px;top:374.9px" width="8.5" height="7" viewBox="0 0 8.5 7"><path d="M0 0.5 L3 0.5 L3.8 1.5 L8.5 1.5 L8.5 7 L0 7 Z" fill="#fbe9bd"/><rect x="0" y="2.3" width="8.5" height="4.7" fill="#f7d98a" opacity="0.35"/></svg>
<div class="a t" style="left:194px;top:373.70px;font-size:7.8px;line-height:10px;color:#333;font-weight:normal;">bin</div>
<svg class="a" style="left:183.5px;top:386.9px" width="8.5" height="7" viewBox="0 0 8.5 7"><path d="M0 0.5 L3 0.5 L3.8 1.5 L8.5 1.5 L8.5 7 L0 7 Z" fill="#fbe9bd"/><rect x="0" y="2.3" width="8.5" height="4.7" fill="#f7d98a" opacity="0.35"/></svg>
<div class="a t" style="left:194px;top:385.70px;font-size:7.8px;line-height:10px;color:#333;font-weight:normal;">boot</div>
<svg class="a" style="left:183.5px;top:398.9px" width="8.5" height="7" viewBox="0 0 8.5 7"><path d="M0 0.5 L3 0.5 L3.8 1.5 L8.5 1.5 L8.5 7 L0 7 Z" fill="#fbe9bd"/><rect x="0" y="2.3" width="8.5" height="4.7" fill="#f7d98a" opacity="0.35"/></svg>
<div class="a t" style="left:194px;top:397.70px;font-size:7.8px;line-height:10px;color:#333;font-weight:normal;">dev</div>
<svg class="a" style="left:183.5px;top:410.9px" width="8.5" height="7" viewBox="0 0 8.5 7"><path d="M0 0.5 L3 0.5 L3.8 1.5 L8.5 1.5 L8.5 7 L0 7 Z" fill="#fbe9bd"/><rect x="0" y="2.3" width="8.5" height="4.7" fill="#f7d98a" opacity="0.35"/></svg>
<div class="a t" style="left:194px;top:409.70px;font-size:7.8px;line-height:10px;color:#333;font-weight:normal;">etc</div>
<svg class="a" style="left:183.5px;top:422.9px" width="8.5" height="7" viewBox="0 0 8.5 7"><path d="M0 0.5 L3 0.5 L3.8 1.5 L8.5 1.5 L8.5 7 L0 7 Z" fill="#fbe9bd"/><rect x="0" y="2.3" width="8.5" height="4.7" fill="#f7d98a" opacity="0.35"/></svg>
<div class="a t" style="left:194px;top:421.70px;font-size:7.8px;line-height:10px;color:#333;font-weight:normal;">home</div>
<svg class="a" style="left:183.5px;top:434.9px" width="8.5" height="7" viewBox="0 0 8.5 7"><path d="M0 0.5 L3 0.5 L3.8 1.5 L8.5 1.5 L8.5 7 L0 7 Z" fill="#fbe9bd"/><rect x="0" y="2.3" width="8.5" height="4.7" fill="#f7d98a" opacity="0.35"/></svg>
<div class="a t" style="left:194px;top:433.70px;font-size:7.8px;line-height:10px;color:#333;font-weight:normal;">lib</div>
<svg class="a" style="left:183.5px;top:446.9px" width="8.5" height="7" viewBox="0 0 8.5 7"><path d="M0 0.5 L3 0.5 L3.8 1.5 L8.5 1.5 L8.5 7 L0 7 Z" fill="#fbe9bd"/><rect x="0" y="2.3" width="8.5" height="4.7" fill="#f7d98a" opacity="0.35"/></svg>
<div class="a t" style="left:194px;top:445.70px;font-size:7.8px;line-height:10px;color:#333;font-weight:normal;">lib64</div>
<svg class="a" style="left:183.5px;top:458.9px" width="8.5" height="7" viewBox="0 0 8.5 7"><path d="M0 0.5 L3 0.5 L3.8 1.5 L8.5 1.5 L8.5 7 L0 7 Z" fill="#fbe9bd"/><rect x="0" y="2.3" width="8.5" height="4.7" fill="#f7d98a" opacity="0.35"/></svg>
<div class="a t" style="left:194px;top:457.70px;font-size:7.8px;line-height:10px;color:#333;font-weight:normal;">media</div>
<svg class="a" style="left:183.5px;top:470.9px" width="8.5" height="7" viewBox="0 0 8.5 7"><path d="M0 0.5 L3 0.5 L3.8 1.5 L8.5 1.5 L8.5 7 L0 7 Z" fill="#fbe9bd"/><rect x="0" y="2.3" width="8.5" height="4.7" fill="#f7d98a" opacity="0.35"/></svg>
<div class="a t" style="left:194px;top:469.70px;font-size:7.8px;line-height:10px;color:#333;font-weight:normal;">mnt</div>
<div class="a" style="left:253px;top:359px;width:4.6px;height:124px;background:#f2f2f2"></div>
<div class="a" style="left:253.3px;top:361px;width:4.2px;height:85.4px;background:#dcdcdc"></div>
<div class="a" style="left:259.6px;top:360px;width:510px;height:123px;background:#fefefe;border-left:1px solid #dadada"></div>
<div class="a" style="left:260.6px;top:374.5px;width:509px;height:0.8px;background:#e4e4e4"></div>
<div class="a" style="left:345.4px;top:360.5px;width:0.8px;height:14px;background:#ececec"></div>
<div class="a" style="left:384.2px;top:360.5px;width:0.8px;height:14px;background:#ececec"></div>
<div class="a" style="left:426.8px;top:360.5px;width:0.8px;height:14px;background:#ececec"></div>
<div class="a" style="left:498.8px;top:360.5px;width:0.8px;height:14px;background:#ececec"></div>
<div class="a" style="left:546.6px;top:360.5px;width:0.8px;height:14px;background:#ececec"></div>
<div class="a" style="left:599.6px;top:360.5px;width:0.8px;height:14px;background:#ececec"></div>
<div class="a t" style="left:280.0px;width:40px;text-align:center;top:362.00px;font-size:7.5px;line-height:10px;color:#2a2a2a;font-weight:normal;text-shadow:0 0 0.3px #555;"><span style="font-size:95%">文件名</span></div>
<div class="a t" style="left:312.0px;width:8px;text-align:center;top:361.50px;font-size:6px;line-height:10px;color:#aaa;font-weight:normal;">^</div>
<div class="a t" style="left:349.8px;width:30px;text-align:center;top:362.00px;font-size:7.5px;line-height:10px;color:#2a2a2a;font-weight:normal;text-shadow:0 0 0.3px #555;"><span style="font-size:95%">大小</span></div>
<div class="a t" style="left:391.0px;width:30px;text-align:center;top:362.00px;font-size:7.5px;line-height:10px;color:#2a2a2a;font-weight:normal;text-shadow:0 0 0.3px #555;"><span style="font-size:95%">类型</span></div>
<div class="a t" style="left:442.6px;width:40px;text-align:center;top:362.00px;font-size:7.5px;line-height:10px;color:#2a2a2a;font-weight:normal;text-shadow:0 0 0.3px #555;"><span style="font-size:95%">修改时间</span></div>
<div class="a t" style="left:507.0px;width:30px;text-align:center;top:362.00px;font-size:7.5px;line-height:10px;color:#2a2a2a;font-weight:normal;text-shadow:0 0 0.3px #555;"><span style="font-size:95%">权限</span></div>
<div class="a t" style="left:547.5px;width:50px;text-align:center;top:362.00px;font-size:7.5px;line-height:10px;color:#2a2a2a;font-weight:normal;text-shadow:0 0 0.3px #555;"><span style="font-size:95%">用户</span>/<span style="font-size:95%">用户组</span></div>
<svg class="a" style="left:263.2px;top:376.4px" width="8.5" height="7.5" viewBox="0 0 8.5 7"><path d="M0 0.5 L3 0.5 L3.8 1.5 L8.5 1.5 L8.5 7 L0 7 Z" fill="#f8d878"/><rect x="0" y="2.3" width="8.5" height="4.7" fill="#f0c040" opacity="0.35"/></svg>
<div class="a t" style="left:274px;top:375.40px;font-size:7.8px;line-height:10px;color:#333;font-weight:normal;transform:scaleX(0.930);transform-origin:0 50%;">.java</div>
<div class="a t" style="left:389.6px;top:375.40px;font-size:7.5px;line-height:10px;color:#333;font-weight:normal;transform:scaleX(0.922);transform-origin:0 50%;"><span style="font-size:95%">文件夹</span></div>
<div class="a t" style="left:431.6px;top:375.40px;font-size:7.5px;line-height:10px;color:#333;font-weight:normal;transform:scaleX(1.048);transform-origin:0 50%;">2023/12/29 10:22</div>
<div class="a t" style="left:502.7px;top:375.40px;font-size:7.5px;line-height:10px;color:#333;font-weight:normal;transform:scaleX(1.058);transform-origin:0 50%;">drwxr-xr-x</div>
<div class="a t" style="left:550.5px;top:375.40px;font-size:7.5px;line-height:10px;color:#333;font-weight:normal;transform:scaleX(1.148);transform-origin:0 50%;">root/root</div>
<div class="a" style="left:260.6px;top:385.95px;width:340px;height:11.05px;background:#f6f6f6"></div>
<svg class="a" style="left:263.2px;top:387.45px" width="8.5" height="7.5" viewBox="0 0 8.5 7"><path d="M0 0.5 L3 0.5 L3.8 1.5 L8.5 1.5 L8.5 7 L0 7 Z" fill="#f8d878"/><rect x="0" y="2.3" width="8.5" height="4.7" fill="#f0c040" opacity="0.35"/></svg>
<div class="a t" style="left:274px;top:386.45px;font-size:7.8px;line-height:10px;color:#333;font-weight:normal;transform:scaleX(0.930);transform-origin:0 50%;">.xterminal</div>
<div class="a t" style="left:389.6px;top:386.45px;font-size:7.5px;line-height:10px;color:#333;font-weight:normal;transform:scaleX(0.922);transform-origin:0 50%;"><span style="font-size:95%">文件夹</span></div>
<div class="a t" style="left:431.6px;top:386.45px;font-size:7.5px;line-height:10px;color:#333;font-weight:normal;transform:scaleX(1.048);transform-origin:0 50%;">2024/01/15 13:04</div>
<div class="a t" style="left:502.7px;top:386.45px;font-size:7.5px;line-height:10px;color:#333;font-weight:normal;transform:scaleX(1.058);transform-origin:0 50%;">drwxr-xr-x</div>
<div class="a t" style="left:550.5px;top:386.45px;font-size:7.5px;line-height:10px;color:#333;font-weight:normal;transform:scaleX(1.148);transform-origin:0 50%;">root/root</div>
<svg class="a" style="left:264px;top:398.50px" width="7" height="8" viewBox="0 0 7 8"><path d="M0.5 0.5 L4.5 0.5 L6.5 2.5 L6.5 7.5 L0.5 7.5 Z" fill="#fff" stroke="#a8a8a8" stroke-width="0.8"/></svg>
<div class="a t" style="left:274px;top:397.50px;font-size:7.8px;line-height:10px;color:#333;font-weight:normal;transform:scaleX(0.930);transform-origin:0 50%;">.bash_history</div>
<div class="a t" style="left:344.4px;width:40px;text-align:right;top:397.50px;font-size:7.5px;line-height:10px;color:#333;font-weight:normal;transform:scaleX(0.954);transform-origin:100% 50%;">12.5 KB</div>
<div class="a t" style="left:389.6px;top:397.50px;font-size:7.5px;line-height:10px;color:#333;font-weight:normal;transform:scaleX(0.922);transform-origin:0 50%;">BASH_HI...</div>
<div class="a t" style="left:431.6px;top:397.50px;font-size:7.5px;line-height:10px;color:#333;font-weight:normal;transform:scaleX(1.048);transform-origin:0 50%;">2024/01/30 11:43</div>
<div class="a t" style="left:502.7px;top:397.50px;font-size:7.5px;line-height:10px;color:#333;font-weight:normal;transform:scaleX(1.058);transform-origin:0 50%;">-rw-------</div>
<div class="a t" style="left:550.5px;top:397.50px;font-size:7.5px;line-height:10px;color:#333;font-weight:normal;transform:scaleX(1.148);transform-origin:0 50%;">root/root</div>
<div class="a" style="left:260.6px;top:408.04999999999995px;width:340px;height:11.05px;background:#f6f6f6"></div>
<svg class="a" style="left:264px;top:409.55px" width="7" height="8" viewBox="0 0 7 8"><path d="M0.5 0.5 L4.5 0.5 L6.5 2.5 L6.5 7.5 L0.5 7.5 Z" fill="#fff" stroke="#a8a8a8" stroke-width="0.8"/></svg>
<div class="a t" style="left:274px;top:408.55px;font-size:7.8px;line-height:10px;color:#333;font-weight:normal;transform:scaleX(0.930);transform-origin:0 50%;">.bash_logout</div>
<div class="a t" style="left:344.4px;width:40px;text-align:right;top:408.55px;font-size:7.5px;line-height:10px;color:#333;font-weight:normal;transform:scaleX(0.954);transform-origin:100% 50%;">18 B</div>
<div class="a t" style="left:389.6px;top:408.55px;font-size:7.5px;line-height:10px;color:#333;font-weight:normal;transform:scaleX(0.922);transform-origin:0 50%;">BASH_LO...</div>
<div class="a t" style="left:431.6px;top:408.55px;font-size:7.5px;line-height:10px;color:#333;font-weight:normal;transform:scaleX(1.048);transform-origin:0 50%;">2013/12/29 10:26</div>
<div class="a t" style="left:502.7px;top:408.55px;font-size:7.5px;line-height:10px;color:#333;font-weight:normal;transform:scaleX(1.058);transform-origin:0 50%;">-rw-r--r--</div>
<div class="a t" style="left:550.5px;top:408.55px;font-size:7.5px;line-height:10px;color:#333;font-weight:normal;transform:scaleX(1.148);transform-origin:0 50%;">root/root</div>
<svg class="a" style="left:264px;top:420.60px" width="7" height="8" viewBox="0 0 7 8"><path d="M0.5 0.5 L4.5 0.5 L6.5 2.5 L6.5 7.5 L0.5 7.5 Z" fill="#fff" stroke="#a8a8a8" stroke-width="0.8"/></svg>
<div class="a t" style="left:274px;top:419.60px;font-size:7.8px;line-height:10px;color:#333;font-weight:normal;transform:scaleX(0.930);transform-origin:0 50%;">.bash_profile</div>
<div class="a t" style="left:344.4px;width:40px;text-align:right;top:419.60px;font-size:7.5px;line-height:10px;color:#333;font-weight:normal;transform:scaleX(0.954);transform-origin:100% 50%;">176 B</div>
<div class="a t" style="left:389.6px;top:419.60px;font-size:7.5px;line-height:10px;color:#333;font-weight:normal;transform:scaleX(0.922);transform-origin:0 50%;">BASH_PR...</div>
<div class="a t" style="left:431.6px;top:419.60px;font-size:7.5px;line-height:10px;color:#333;font-weight:normal;transform:scaleX(1.048);transform-origin:0 50%;">2013/12/29 10:26</div>
<div class="a t" style="left:502.7px;top:419.60px;font-size:7.5px;line-height:10px;color:#333;font-weight:normal;transform:scaleX(1.058);transform-origin:0 50%;">-rw-r--r--</div>
<div class="a t" style="left:550.5px;top:419.60px;font-size:7.5px;line-height:10px;color:#333;font-weight:normal;transform:scaleX(1.148);transform-origin:0 50%;">root/root</div>
<div class="a" style="left:260.6px;top:430.15px;width:340px;height:11.05px;background:#f6f6f6"></div>
<svg class="a" style="left:264px;top:431.65px" width="7" height="8" viewBox="0 0 7 8"><path d="M0.5 0.5 L4.5 0.5 L6.5 2.5 L6.5 7.5 L0.5 7.5 Z" fill="#fff" stroke="#a8a8a8" stroke-width="0.8"/></svg>
<div class="a t" style="left:274px;top:430.65px;font-size:7.8px;line-height:10px;color:#333;font-weight:normal;transform:scaleX(0.930);transform-origin:0 50%;">.bashrc</div>
<div class="a t" style="left:344.4px;width:40px;text-align:right;top:430.65px;font-size:7.5px;line-height:10px;color:#333;font-weight:normal;transform:scaleX(0.954);transform-origin:100% 50%;">176 B</div>
<div class="a t" style="left:389.6px;top:430.65px;font-size:7.5px;line-height:10px;color:#333;font-weight:normal;transform:scaleX(0.922);transform-origin:0 50%;">BASHRC ...</div>
<div class="a t" style="left:431.6px;top:430.65px;font-size:7.5px;line-height:10px;color:#333;font-weight:normal;transform:scaleX(1.048);transform-origin:0 50%;">2013/12/29 10:26</div>
<div class="a t" style="left:502.7px;top:430.65px;font-size:7.5px;line-height:10px;color:#333;font-weight:normal;transform:scaleX(1.058);transform-origin:0 50%;">-rw-r--r--</div>
<div class="a t" style="left:550.5px;top:430.65px;font-size:7.5px;line-height:10px;color:#333;font-weight:normal;transform:scaleX(1.148);transform-origin:0 50%;">root/root</div>
<svg class="a" style="left:264px;top:442.70px" width="7" height="8" viewBox="0 0 7 8"><path d="M0.5 0.5 L4.5 0.5 L6.5 2.5 L6.5 7.5 L0.5 7.5 Z" fill="#fff" stroke="#a8a8a8" stroke-width="0.8"/></svg>
<div class="a t" style="left:274px;top:441.70px;font-size:7.8px;line-height:10px;color:#333;font-weight:normal;transform:scaleX(0.930);transform-origin:0 50%;">.cshrc</div>
<div class="a t" style="left:344.4px;width:40px;text-align:right;top:441.70px;font-size:7.5px;line-height:10px;color:#333;font-weight:normal;transform:scaleX(0.954);transform-origin:100% 50%;">100 B</div>
<div class="a t" style="left:389.6px;top:441.70px;font-size:7.5px;line-height:10px;color:#333;font-weight:normal;transform:scaleX(0.922);transform-origin:0 50%;">CSHRC <span style="font-size:95%">文</span>...</div>
<div class="a t" style="left:431.6px;top:441.70px;font-size:7.5px;line-height:10px;color:#333;font-weight:normal;transform:scaleX(1.048);transform-origin:0 50%;">2013/12/29 10:26</div>
<div class="a t" style="left:502.7px;top:441.70px;font-size:7.5px;line-height:10px;color:#333;font-weight:normal;transform:scaleX(1.058);transform-origin:0 50%;">-rw-r--r--</div>
<div class="a t" style="left:550.5px;top:441.70px;font-size:7.5px;line-height:10px;color:#333;font-weight:normal;transform:scaleX(1.148);transform-origin:0 50%;">root/root</div>
<div class="a" style="left:260.6px;top:452.25px;width:340px;height:11.05px;background:#f6f6f6"></div>
<svg class="a" style="left:264px;top:453.75px" width="7" height="8" viewBox="0 0 7 8"><path d="M0.5 0.5 L4.5 0.5 L6.5 2.5 L6.5 7.5 L0.5 7.5 Z" fill="#fff" stroke="#a8a8a8" stroke-width="0.8"/></svg>
<div class="a t" style="left:274px;top:452.75px;font-size:7.8px;line-height:10px;color:#333;font-weight:normal;transform:scaleX(0.930);transform-origin:0 50%;">.tcshrc</div>
<div class="a t" style="left:344.4px;width:40px;text-align:right;top:452.75px;font-size:7.5px;line-height:10px;color:#333;font-weight:normal;transform:scaleX(0.954);transform-origin:100% 50%;">129 B</div>
<div class="a t" style="left:389.6px;top:452.75px;font-size:7.5px;line-height:10px;color:#333;font-weight:normal;transform:scaleX(0.922);transform-origin:0 50%;">TCSHRC ...</div>
<div class="a t" style="left:431.6px;top:452.75px;font-size:7.5px;line-height:10px;color:#333;font-weight:normal;transform:scaleX(1.048);transform-origin:0 50%;">2013/12/29 10:26</div>
<div class="a t" style="left:502.7px;top:452.75px;font-size:7.5px;line-height:10px;color:#333;font-weight:normal;transform:scaleX(1.058);transform-origin:0 50%;">-rw-r--r--</div>
<div class="a t" style="left:550.5px;top:452.75px;font-size:7.5px;line-height:10px;color:#333;font-weight:normal;transform:scaleX(1.148);transform-origin:0 50%;">root/root</div>
<svg class="a" style="left:264px;top:464.80px" width="7" height="8" viewBox="0 0 7 8"><path d="M0.5 0.5 L4.5 0.5 L6.5 2.5 L6.5 7.5 L0.5 7.5 Z" fill="#fff" stroke="#a8a8a8" stroke-width="0.8"/></svg>
<div class="a t" style="left:274px;top:463.80px;font-size:7.8px;line-height:10px;color:#333;font-weight:normal;transform:scaleX(0.930);transform-origin:0 50%;">anaconda-ks.cfg</div>
<div class="a t" style="left:344.4px;width:40px;text-align:right;top:463.80px;font-size:7.5px;line-height:10px;color:#333;font-weight:normal;transform:scaleX(0.954);transform-origin:100% 50%;">1.2 KB</div>
<div class="a t" style="left:389.6px;top:463.80px;font-size:7.5px;line-height:10px;color:#333;font-weight:normal;transform:scaleX(0.922);transform-origin:0 50%;">CFG <span style="font-size:95%">文件</span></div>
<div class="a t" style="left:431.6px;top:463.80px;font-size:7.5px;line-height:10px;color:#333;font-weight:normal;transform:scaleX(1.048);transform-origin:0 50%;">2023/12/28 13:34</div>
<div class="a t" style="left:502.7px;top:463.80px;font-size:7.5px;line-height:10px;color:#333;font-weight:normal;transform:scaleX(1.058);transform-origin:0 50%;">-rw-------</div>
<div class="a t" style="left:550.5px;top:463.80px;font-size:7.5px;line-height:10px;color:#333;font-weight:normal;transform:scaleX(1.148);transform-origin:0 50%;">root/root</div>
</body></html>
